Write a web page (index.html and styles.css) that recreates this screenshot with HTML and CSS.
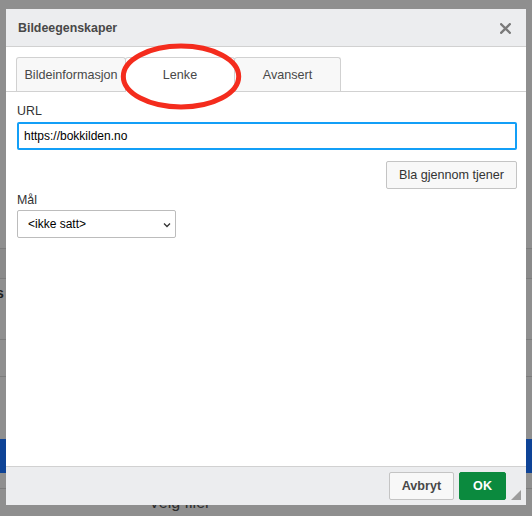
FILE: index.html
```html
<!DOCTYPE html>
<html lang="nb">
<head>
  <meta charset="UTF-8" />
  <title>Bildeegenskaper</title>
  <link rel="stylesheet" href="styles.css">
</head>
<body>
  <div class="page">
    <div class="bg-top"></div>
    <div class="bg-row bar1"></div>
    <div class="bg-row bar2"><span class="bg-word">s</span></div>
    <div class="bg-row bar3"></div>
    <div class="bg-row bar4"></div>
    <div class="bg-blue"></div>
    <div class="bg-gap"></div>
    <div class="bg-row bar5"><span class="bg-files">Velg filer</span></div>
  </div>

  <div class="dialog">
    <div class="dialog-title">
      <span>Bildeegenskaper</span>
      <svg class="close" width="11" height="11" viewBox="0 0 11 11">
        <path d="M1.2 1.2 L9.8 9.8 M9.8 1.2 L1.2 9.8" stroke="#7a7a7a" stroke-width="2.3" stroke-linecap="square"/>
      </svg>
    </div>
    <div class="tabs">
      <div class="tab">Bildeinformasjon</div>
      <div class="tab active">Lenke</div>
      <div class="tab">Avansert</div>
    </div>
    <div class="dialog-body">
      <label class="field-label" for="url">URL</label>
      <input class="text-input" id="url" type="text" value="https://bokkilden.no">
      <div class="browse-row">
        <button class="btn">Bla gjennom tjener</button>
      </div>
      <label class="field-label" for="target">Mål</label>
      <div class="select-wrap">
        <select id="target" class="select">
          <option>&lt;ikke satt&gt;</option>
        </select>
        <svg class="chevron" width="8" height="6" viewBox="0 0 8 6">
          <path d="M1 1.5 L4 4.5 L7 1.5" fill="none" stroke="#333" stroke-width="1.3"/>
        </svg>
      </div>
    </div>
    <div class="dialog-footer">
      <button class="btn btn-footer">Avbryt</button>
      <button class="btn btn-footer btn-ok">OK</button>
      <div class="resize"></div>
    </div>
  </div>

  <svg class="mark" width="130" height="74" viewBox="0 0 130 74">
    <ellipse cx="63" cy="36.5" rx="57.7" ry="30.5" fill="none" stroke="#f42c1d" stroke-width="5"/>
  </svg>
</body>
</html>
```

FILE: styles.css
```css
body {
  margin: 0;
  width: 532px;
  height: 516px;
  overflow: hidden;
  background: #8f8f8f;
  font-family: "Liberation Sans", Arial, sans-serif;
  position: relative;
}

/* page behind the overlay */
.page {
  width: 532px;
}

.bg-top {
  height: 248px;
}

.bg-row {
  border-top: 1px solid #7c7c7c;
}

.bar1 {
  height: 29px;
  background: #8a8a8a;
}

.bar2 {
  height: 60px;
}

.bg-word {
  display: block;
  margin-left: -4px;
  padding-top: 6px;
  font-size: 14px;
  font-weight: bold;
  color: #1e1e1e;
}

.bar3 {
  height: 36px;
}

.bar4 {
  height: 62px;
}

.bg-blue {
  height: 34px;
  background: #0e4396;
}

.bg-gap {
  height: 15px;
}

.bar5 {
  height: 40px;
}

.bg-files {
  display: block;
  padding-left: 149px;
  padding-top: 5px;
  font-size: 16px;
  color: #2c2c2c;
}

/* dialog */
.dialog {
  position: absolute;
  left: 6px;
  top: 9px;
  width: 520px;
  height: 496px;
  background: #fff;
  display: flex;
  flex-direction: column;
  color: #484848;
}

.dialog-title {
  height: 37px;
  border-bottom: 1px solid #d1d1d1;
  background: #ecedef;
  display: flex;
  align-items: center;
  justify-content: space-between;
  padding: 0 15px 0 12px;
  font-size: 12.4px;
  font-weight: bold;
  color: #484848;
}

.close {
  margin-top: 1px;
}

.tabs {
  display: flex;
  padding: 10px 0 0 10px;
  border-bottom: 1px solid #d1d1d1;
}

.tab {
  width: 110px;
  height: 34px;
  box-sizing: border-box;
  margin-bottom: -1px;
  margin-right: -1px;
  border: 1px solid #d1d1d1;
  border-bottom: none;
  border-radius: 3px 3px 0 0;
  background: #f8f8f8;
  display: flex;
  align-items: center;
  justify-content: center;
  font-size: 12.6px;
  color: #484848;
}

.tab:last-child {
  width: 107px;
}

.tab.active {
  background: #fff;
  height: 35px;
}

.dialog-body {
  flex: 1;
  padding: 12px 9px 0 11px;
  display: flex;
  flex-direction: column;
  align-items: flex-start;
}

.field-label {
  font-size: 12.4px;
  line-height: 15px;
  color: #333;
}

.text-input {
  margin-top: 3px;
  width: 100%;
  height: 28px;
  box-sizing: border-box;
  border: 2px solid #139ff7;
  border-radius: 2px;
  padding: 0 5px;
  font-family: inherit;
  font-size: 12px;
  color: #000;
  outline: none;
}

.browse-row {
  width: 100%;
  display: flex;
  justify-content: flex-end;
  margin: 11px 0 4px;
}

.btn {
  height: 28px;
  padding: 0 12px;
  border: 1px solid #c4c4c4;
  border-radius: 2px;
  background: #f8f8f8;
  font-family: inherit;
  font-size: 12.6px;
  color: #333;
}

.select-wrap {
  position: relative;
  margin-top: 2px;
}

.select {
  appearance: none;
  -webkit-appearance: none;
  width: 159px;
  height: 28px;
  border: 1px solid #bcbcbc;
  border-radius: 2px;
  background: #fff;
  padding: 0 10px;
  font-family: inherit;
  font-size: 12px;
  color: #000;
}

.chevron {
  position: absolute;
  left: 146px;
  top: 12px;
}

.dialog-footer {
  height: 38px;
  border-top: 1px solid #d1d1d1;
  background: #ecedef;
  display: flex;
  align-items: center;
  justify-content: flex-end;
  gap: 5px;
  padding-right: 20px;
  position: relative;
}

.btn-footer {
  height: 28px;
  padding: 0 12px;
  font-weight: bold;
  color: #484848;
  background: #f8f8f8;
}

.btn-ok {
  padding: 0 13px;
  background: #0b8a3e;
  border-color: #0b8a3e;
  color: #fff;
}

.resize {
  position: absolute;
  right: 5px;
  bottom: 5px;
  width: 0;
  height: 0;
  border-left: 10px solid transparent;
  border-bottom: 10px solid #9c9c9c;
}

.mark {
  position: absolute;
  left: 118px;
  top: 40px;
}
```
